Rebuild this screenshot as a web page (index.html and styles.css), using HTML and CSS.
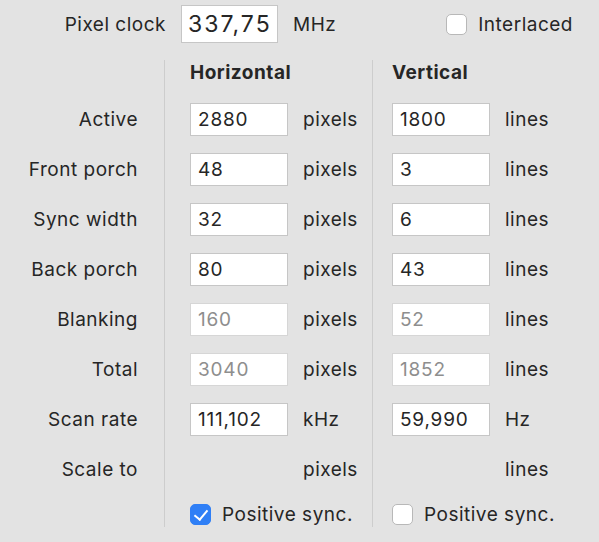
FILE: index.html
```html
<!DOCTYPE html>
<html lang="en">
<head>
<meta charset="UTF-8">
<title>Timing</title>
<link rel="stylesheet" href="styles.css">
</head>
<body>

<div class="top">
  <span class="top-label">Pixel clock</span>
  <input class="clock" type="text" value="337,75">
  <span class="unit">MHz</span>
  <label class="check interlaced"><span class="box"></span>Interlaced</label>
</div>

<div class="timing">
  <div class="col labels">
    <div class="head"></div>
    <div class="row">Active</div>
    <div class="row">Front porch</div>
    <div class="row">Sync width</div>
    <div class="row">Back porch</div>
    <div class="row">Blanking</div>
    <div class="row">Total</div>
    <div class="row">Scan rate</div>
    <div class="row">Scale to</div>
    <div class="foot"></div>
  </div>

  <div class="col horiz">
    <div class="head">Horizontal</div>
    <div class="row"><input type="text" value="2880"><span class="unit">pixels</span></div>
    <div class="row"><input type="text" value="48"><span class="unit">pixels</span></div>
    <div class="row"><input type="text" value="32"><span class="unit">pixels</span></div>
    <div class="row"><input type="text" value="80"><span class="unit">pixels</span></div>
    <div class="row"><input type="text" value="160" disabled><span class="unit">pixels</span></div>
    <div class="row"><input type="text" value="3040" disabled><span class="unit">pixels</span></div>
    <div class="row"><input type="text" value="111,102"><span class="unit">kHz</span></div>
    <div class="row"><span class="blank"></span><span class="unit">pixels</span></div>
    <div class="foot"><label class="check"><span class="box on"></span>Positive sync.</label></div>
  </div>

  <div class="col vert">
    <div class="head">Vertical</div>
    <div class="row"><input type="text" value="1800"><span class="unit">lines</span></div>
    <div class="row"><input type="text" value="3"><span class="unit">lines</span></div>
    <div class="row"><input type="text" value="6"><span class="unit">lines</span></div>
    <div class="row"><input type="text" value="43"><span class="unit">lines</span></div>
    <div class="row"><input type="text" value="52" disabled><span class="unit">lines</span></div>
    <div class="row"><input type="text" value="1852" disabled><span class="unit">lines</span></div>
    <div class="row"><input type="text" value="59,990"><span class="unit">Hz</span></div>
    <div class="row"><span class="blank"></span><span class="unit">lines</span></div>
    <div class="foot"><label class="check"><span class="box"></span>Positive sync.</label></div>
  </div>
</div>

</body>
</html>
```

FILE: styles.css
```css
html, body {
  margin: 0;
  padding: 0;
  background-color: #e3e3e3;
  color: #262626;
  font-family: Inter, "Liberation Sans", sans-serif;
  font-size: 19px;
  letter-spacing: 0.5px;
}
input {
  font-family: inherit;
  font-size: 19px;
  letter-spacing: 0.8px;
  color: #262626;
  background: white;
  border: 1px solid #c6c6c6;
  box-sizing: border-box;
  outline: none;
  margin: 0;
}
input:disabled {
  color: #8e8e8e;
  border-color: #d6d6d6;
}

/* top line */
.top {
  display: flex;
  align-items: center;
  height: 38px;
  padding: 5px 26px 0 0;
}
.top-label {
  width: 166px;
  text-align: right;
}
.clock {
  width: 97px;
  height: 38px;
  margin-left: 15px;
  padding: 0 6px;
  font-size: 23px;
  letter-spacing: 2px;
}
.top .unit {
  margin-left: 15px;
}
.interlaced {
  margin-left: auto;
}

/* checkboxes */
.check {
  display: flex;
  align-items: center;
}
.box {
  width: 21px;
  height: 21px;
  box-sizing: border-box;
  border: 1px solid #b8b8b8;
  border-radius: 5px;
  background: white;
  margin-right: 11px;
  position: relative;
}
.box.on {
  background: #2f7ff6;
  border-color: #2f7ff6;
}
.box.on::after {
  content: "";
  position: absolute;
  left: 6px;
  top: 2px;
  width: 6px;
  height: 11px;
  border-right: 2.5px solid white;
  border-bottom: 2.5px solid white;
  transform: rotate(40deg);
}

/* timing table */
.timing {
  display: flex;
  margin-top: 17px;
}
.col {
  display: flex;
  flex-direction: column;
}
.labels {
  width: 138px;
  padding-right: 26px;
  text-align: right;
}
.horiz, .vert {
  border-left: 1px solid #cdcdcd;
}
.horiz {
  width: 182px;
  padding-left: 25px;
}
.vert {
  padding-left: 19px;
}
.head {
  height: 34px;
  line-height: 26px;
  font-weight: bold;
}
.row {
  height: 50px;
  display: flex;
  align-items: center;
  justify-content: flex-end;
  white-space: nowrap;
}
.horiz .row, .vert .row {
  justify-content: flex-start;
}
.row input, .blank {
  width: 98px;
  height: 33px;
  padding: 0 7px;
  box-sizing: border-box;
}
.row .unit {
  margin-left: 15px;
}
.foot {
  height: 33px;
  padding-top: 9px;
  box-sizing: border-box;
  white-space: nowrap;
}
```
